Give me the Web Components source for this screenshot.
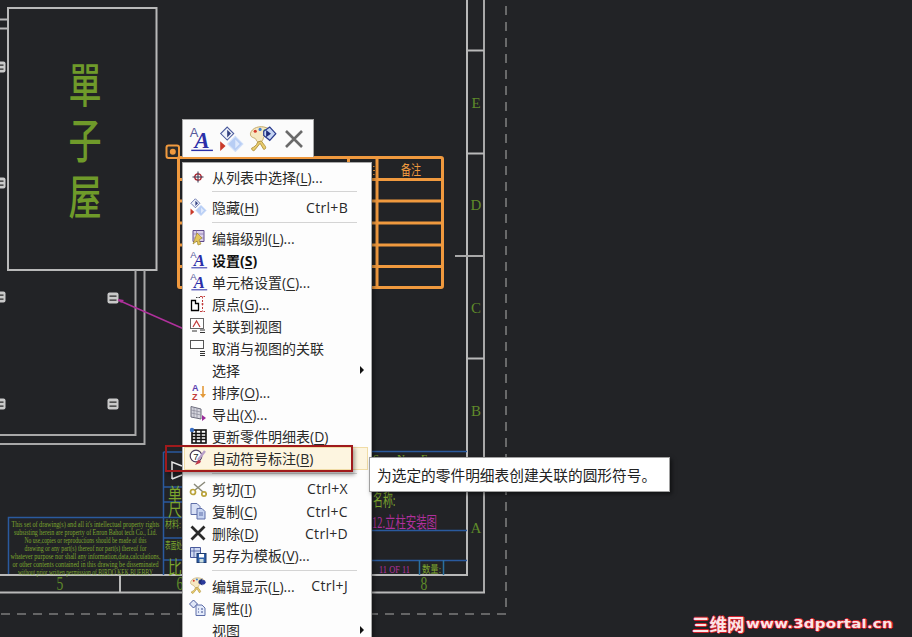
<!DOCTYPE html>
<html lang="zh">
<head>
<meta charset="utf-8">
<title>Drawing</title>
<style>
  html, body { margin: 0; height: 100%; overflow: hidden; background: #222326; }
  body { font-family: "Noto Sans", "Noto Sans CJK SC", sans-serif; }
</style>
</head>
<body>

<cad-sheet>
  <mini-toolbar></mini-toolbar>
  <ctx-menu>
    <ctx-item icon="target" label="从列表中选择(<u>L</u>)..."></ctx-item>
    <ctx-sep></ctx-sep>
    <ctx-item icon="hide" label="隐藏(<u>H</u>)" shortcut="Ctrl+B"></ctx-item>
    <ctx-sep></ctx-sep>
    <ctx-item icon="level" label="编辑级别(<u>L</u>)..."></ctx-item>
    <ctx-item icon="aa" label="设置(<u>S</u>)" bold></ctx-item>
    <ctx-item icon="aa" label="单元格设置(<u>C</u>)..."></ctx-item>
    <ctx-item icon="origin" label="原点(<u>G</u>)..."></ctx-item>
    <ctx-item icon="link" label="关联到视图"></ctx-item>
    <ctx-item icon="unlink" label="取消与视图的关联"></ctx-item>
    <ctx-item label="选择" submenu></ctx-item>
    <ctx-item icon="sort" label="排序(<u>O</u>)..."></ctx-item>
    <ctx-item icon="export" label="导出(<u>X</u>)..."></ctx-item>
    <ctx-item icon="update" label="更新零件明细表(<u>D</u>)"></ctx-item>
    <ctx-item icon="balloon" label="自动符号标注(<u>B</u>)" active></ctx-item>
    <ctx-sep></ctx-sep>
    <ctx-item icon="cut" label="剪切(<u>T</u>)" shortcut="Ctrl+X"></ctx-item>
    <ctx-item icon="copy" label="复制(<u>C</u>)" shortcut="Ctrl+C"></ctx-item>
    <ctx-item icon="del" label="删除(<u>D</u>)" shortcut="Ctrl+D"></ctx-item>
    <ctx-item icon="template" label="另存为模板(<u>V</u>)..."></ctx-item>
    <ctx-sep></ctx-sep>
    <ctx-item icon="palette" label="编辑显示(<u>L</u>)..." shortcut="Ctrl+J"></ctx-item>
    <ctx-item icon="props" label="属性(<u>I</u>)"></ctx-item>
    <ctx-item label="视图" submenu></ctx-item>
  </ctx-menu>
  <red-mark></red-mark>
  <hint-tip>为选定的零件明细表创建关联的圆形符号。</hint-tip>
  <water-mark></water-mark>
</cad-sheet>

<script>
// shared icon drawings
const aaIcon = (s) => `<svg width="${s}" height="${s}" viewBox="0 0 24 24"><text x="1.500" y="10.500" font-family="Liberation Sans" font-size="12" fill="#55589a">A</text><text x="6" y="20.500" font-family="Liberation Serif" font-style="italic" font-weight="bold" font-size="21" fill="#2b2fa8">A</text><path d="M3 22.500h20" stroke="#2b2fa8" stroke-width="1.300"/></svg>`;
const hideIcon = (s) => `<svg width="${s}" height="${s}" viewBox="0 0 24 24"><path d="M8.500 1l6 6-6 6-6-6z" fill="#eef2fb" stroke="#4a5a9c" stroke-width="1"/><path d="M8.500 3.500v7l3.500-3.500z" fill="#33407f"/><path d="M2 14l5 4.500-5 4.500z" fill="#c93a2a"/><path d="M16 9.500l7 7-7 7-7-7z" fill="#b7cdf4" stroke="#d2e0f9"/><path d="M16 12.500v8l4-4z" fill="#dfe9fc"/></svg>`;
const paletteIcon = (s, mark) => `<svg width="${s}" height="${s}" viewBox="0 0 24 24"><path d="M2 8c1-5 8-7 13-5 4 1 6 4 4 6-2 1-5 0-6 2-1 3-2 5-4 4-2 0-2-2-3-3-2-1-4-1-4-4z" fill="#f6e8c2" stroke="#c0a665" stroke-width=".8"/><circle cx="6" cy="6" r="1.300" fill="#d43c2c"/><circle cx="10" cy="4.500" r="1.300" fill="#3f7fd4"/><circle cx="14" cy="5.500" r="1.200" fill="#4da84d"/><path d="M8 15c-1 3-3 4-5 5 0 2 2 3 3 1l4-5 3 5c2 0 2-2 1-3l-3-4z" fill="#e8cc6c" stroke="#a98a35" stroke-width=".7"/>${mark}</svg>`;
const icons = {
  target: `<svg width="18" height="18" viewBox="0 0 18 18"><circle cx="9" cy="9" r="3.200" fill="none" stroke="#b0252f" stroke-width="1.300"/><path d="M9 3.500v11M3.500 9h11" stroke="#30304a" stroke-width="1"/></svg>`,
  hide: hideIcon(18),
  level: `<svg width="18" height="18" viewBox="0 0 18 18"><path d="M4 1.500h11v11H4z" fill="#dcd0ea" stroke="#5f4a8c"/><path d="M7.500 1.500v11M4 5h11M4 9h11" stroke="#8a78ad" stroke-width=".8"/><path d="M8 4l5 5-3 2 2 4-3 1-1-4-4 3z" fill="#e3c55a" stroke="#a08a35" stroke-width=".7"/></svg>`,
  aa: aaIcon(19),
  origin: `<svg width="18" height="18" viewBox="0 0 18 18"><path d="M2.500 5.500h4v3h3v7h-7z" fill="#fff" stroke="#000" stroke-width="1.300"/><path d="M11 1.500h5M13.500 1.500v15M11 16.500h5" stroke="#c23a3a" stroke-width="1" stroke-dasharray="2 1.500"/><path d="M7 2.500h4" stroke="#3a3a3a" stroke-dasharray="1.500 1"/><circle cx="13.500" cy="9" r="1" fill="#c23a3a"/></svg>`,
  link: `<svg width="18" height="18" viewBox="0 0 18 18"><rect x="1.500" y="1.500" width="13" height="10" fill="#fff" stroke="#666"/><path d="M4 10l3.500-6 3.500 6" fill="none" stroke="#c23a3a" stroke-width="1.200"/><path d="M3 14h5M11 13h5M11 15.500h5" stroke="#333"/></svg>`,
  unlink: `<svg width="18" height="18" viewBox="0 0 18 18"><rect x="1.500" y="1.500" width="13" height="8" fill="#fff" stroke="#555"/><path d="M11 12.500h5M11 14.500h5M11 16.500h5" stroke="#333"/></svg>`,
  sort: `<svg width="18" height="18" viewBox="0 0 18 18"><text x="3" y="8" font-family="Liberation Sans" font-weight="bold" font-size="9" fill="#5a40b0">A</text><text x="3" y="17" font-family="Liberation Sans" font-weight="bold" font-size="9" fill="#c23a3a">Z</text><path d="M14 3v10" stroke="#e39a3a" stroke-width="1.600"/><path d="M11 11l3 4 3-4z" fill="#e39a3a"/></svg>`,
  export: `<svg width="18" height="18" viewBox="0 0 18 18"><path d="M2 1.500l10 2.500v10l-10-2z" fill="#d5d5de" stroke="#6a6a7a"/><path d="M5 2.500v10M8 3v10M2 5l10 2M2 8l10 2" stroke="#8a8a9a" stroke-width=".7"/><path d="M13 10l4 3-4 3z" fill="#9a2a9a"/></svg>`,
  update: `<svg width="18" height="18" viewBox="0 0 18 18"><rect x="3" y="3" width="14" height="13" fill="#fff" stroke="#111" stroke-width="1.600"/><path d="M3 6.500h14M3 9.500h14M3 12.500h14M7 3v13M12 3v13" stroke="#111" stroke-width="1.500"/><circle cx="3" cy="3" r="2.200" fill="#3a6fc4"/></svg>`,
  balloon: `<svg width="18" height="18" viewBox="0 0 18 18"><circle cx="7" cy="7" r="5.800" fill="#fff" stroke="#4a3a5a" stroke-width="1.200"/><text x="4.200" y="10.500" font-family="Liberation Sans" font-size="9.500" fill="#222">7</text><path d="M16 2L9 11" stroke="#b9a0c8" stroke-width="2.400"/><path d="M9 11l-3 5 5-2 1-2z" fill="#c23a4a"/></svg>`,
  cut: `<svg width="18" height="18" viewBox="0 0 18 18"><path d="M16 2L6 10M5 4l9 8" stroke="#8a8a7a" stroke-width="1.500"/><circle cx="4" cy="12" r="2.500" fill="none" stroke="#b9a23a" stroke-width="1.700"/><circle cx="15" cy="14" r="2.200" fill="none" stroke="#b9a23a" stroke-width="1.700"/></svg>`,
  copy: `<svg width="18" height="18" viewBox="0 0 18 18"><path d="M2 1.500h6l3 3v8h-9z" fill="#d8e0f5" stroke="#5f6fa8"/><path d="M8 6.500h5l3 3v7.500h-8z" fill="#c5d2f0" stroke="#5f6fa8"/><path d="M10 11h4M10 13h4" stroke="#5f6fa8"/></svg>`,
  del: `<svg width="18" height="18" viewBox="0 0 18 18"><path d="M2.500 2.500l13 13M15.500 2.500l-13 13" stroke="#2a2a2a" stroke-width="2.800"/></svg>`,
  template: `<svg width="18" height="18" viewBox="0 0 18 18"><path d="M1.500 1.500h10v10h-10z" fill="#cfd9f2" stroke="#4a5a9c"/><path d="M1.500 5h10M5 1.500v10" stroke="#4a5a9c" stroke-width=".8"/><rect x="8" y="7.500" width="9" height="9" fill="#2f5fa8" stroke="#1e3c70"/><rect x="10" y="8" width="5" height="3.500" fill="#fff"/><rect x="10.500" y="13" width="4" height="3.500" fill="#cdd"/></svg>`,
  palette: paletteIcon(19, `<path d="M12 6l5-3v9l-5-3z" fill="#1f2c7a"/><circle cx="18" cy="8" r="3" fill="#2a3a9c"/>`),
  props: `<svg width="18" height="18" viewBox="0 0 18 18"><path d="M4.500 1l4 4-4 4-4-4z" fill="#dfe6f7" stroke="#4a5a9c"/><path d="M7 6h6l3 3v7.500H7z" fill="#e4ebfa" stroke="#5f6fa8"/><path d="M9 10h1M12 10h2M9 13h1M12 13h2" stroke="#3a4a8c" stroke-width="1.200"/></svg>`
};

class CadSheet extends HTMLElement {
  constructor() {
    super();
    const root = this.attachShadow({ mode: 'open' });
    const green = '#7da62e', line = '#b9b9b9', blue = '#2a5a9e', orange = '#f0993e', pink = '#b0309c';
    const handle = (x, y) => `<g transform="translate(${x} ${y})"><rect x="-5.500" y="-5.500" width="11" height="11" rx="2" fill="#c9c9c9"/><path d="M-3.500-2.500h7v1.200h-7zM-3.500 1.500h7v1.200h-7z" fill="#2a2a2a"/></g>`;
    const hl = (y, x1, x2, c, w) => `<path d="M${x1} ${y}H${x2}" stroke="${c}" stroke-width="${w}"/>`;
    const vl = (x, y1, y2, c, w) => `<path d="M${x} ${y1}V${y2}" stroke="${c}" stroke-width="${w}"/>`;
    // tall narrow lettering like the CAD font
    const tall = (x, y, t, sx, sy, attrs) => `<text transform="translate(${x} ${y}) scale(${sx} ${sy})" ${attrs || ''}>${t}</text>`;
    const fine = [
      "This set of drawing(s) and all it's intellectual property rights",
      "subsisting herein are property of Enron Bahot tech Co., Ltd.",
      "No use,copies or reproductions should be made of this",
      "drawing or any part(s) thereof nor part(s) thereof for",
      "whatever purpose nor shall any information,data,calculations,",
      "or other contents contained in this drawing be disseminated",
      "without prior written permission of BIRDO KEK BUEBBY"
    ];
    root.innerHTML = `
      <style>
        :host { display: block; position: relative; width: 912px; height: 637px; overflow: hidden; background: #222326; }
        svg.draw { position: absolute; left: 0; top: 0; }
        svg.draw text { font-family: "Liberation Serif", "Noto Sans CJK SC", serif; }
      </style>
      <svg class="draw" width="912" height="637" viewBox="0 0 912 637">
        <!-- sheet frame -->
        ${vl(467, 0, 575, line, 2)}${vl(484, 0, 593, '#a8a8a8', 2)}
        ${hl(575, 0, 468, line, 2)}${hl(592.500, 0, 485, line, 2)}
        ${vl(120, 575, 592, line, 2)}
        ${hl(50.500, 467, 484, line, 2)}${hl(153.500, 467, 484, line, 2)}${hl(358.500, 467, 484, line, 2)}
        ${hl(256, 455, 484, '#a8a8a8', 2)}
        <path d="M506 6V614H0" fill="none" stroke="#7c7c7c" stroke-width="1.600" stroke-dasharray="9 7"/>
        <g fill="#5f8a2a" font-size="15" text-anchor="middle">
          <text x="476" y="108">E</text><text x="476" y="210">D</text><text x="476" y="313">C</text>
          <text x="476" y="416">B</text><text x="476" y="533">A</text>
          ${tall(60, 590, '5', .8, 1.1, 'font-size="17"')}${tall(180, 590, '6', .8, 1.1, 'font-size="17"')}${tall(424, 590, '8', .8, 1.1, 'font-size="17"')}
        </g>

        <!-- part outline -->
        <rect x="8" y="8" width="148.500" height="262" fill="none" stroke="${line}" stroke-width="2"/>
        ${hl(19.500, 0, 8, line, 2)}${hl(28.500, 0, 8, line, 2)}
        ${vl(135.500, 270, 436, '#a8a8a8', 2)}${vl(144.500, 270, 445, '#a8a8a8', 2)}
        ${hl(435, 0, 136, '#a8a8a8', 2)}${hl(444, 0, 145, '#a8a8a8', 2)}
        <g fill="#6f9a2a" font-size="36" text-anchor="middle" font-weight="500">
          ${tall(85, 102, '單', .92, 1.28)}${tall(85, 158, '子', .92, 1.28)}${tall(85, 214, '屋', .92, 1.28)}
        </g>
        ${handle(0, 67)}${handle(0, 183)}${handle(0, 297)}${handle(113, 298)}${handle(0, 404)}${handle(113, 404)}
        <path d="M118 300L184 329" stroke="${pink}" stroke-width="1.400"/>
        <path d="M118 299l6 1-3 3z" fill="${pink}"/>

        <!-- title block -->
        <g fill="none" stroke="${blue}" stroke-width="1.500">
          <path d="M8.500 574V517.500H182M163.500 452V575M163.500 452H182M163.500 487H182M163.500 502H182M163.500 538H182M163.500 560H182"/>
          <path d="M372 451.500H467M372 530.500H467M372 560.500H467"/>
          <path d="M419.500 560V575M443.500 560V575" stroke="#2a6f9e"/>
        </g>
        <g fill="${green}">
          ${fine.map((t, i) => `<text x="85.500" y="${526.500 + i * 8.100}" text-anchor="middle" font-size="8.400" textLength="${[148,143,122,122,150,146,135][i]}" lengthAdjust="spacingAndGlyphs">${t}</text>`).join('')}
          ${tall(168, 501, '单', .92, 1.2, 'font-size="15"')}
          ${tall(168, 516, '尺', .92, 1.1, 'font-size="15"')}
          <text x="165" y="528" font-size="10" textLength="16" lengthAdjust="spacingAndGlyphs">材料:</text>
          <text x="165" y="549" font-size="10" textLength="17" lengthAdjust="spacingAndGlyphs">表面处</text>
          ${tall(168, 574, '比', .92, 1.2, 'font-size="15"')}
          <text x="373" y="462" font-size="11">S</text><text x="397" y="462" font-size="11">N</text><text x="421" y="462" font-size="11">E</text>
          ${tall(373, 506, '<tspan>名称:</tspan>', .66, 1.1, 'font-size="15"')}
          <text x="422" y="573" font-size="10.500" textLength="19" lengthAdjust="spacingAndGlyphs">数量:</text>
        </g>
        <g fill="${pink}">
          <text x="372" y="528" font-size="16" textLength="65" lengthAdjust="spacingAndGlyphs">12.立柱安装图</text>
          <text x="379" y="573" font-size="10" textLength="31" lengthAdjust="spacingAndGlyphs">11 OF 11</text>
        </g>
        <path d="M172 479V462L182 466M172 479L182 475" fill="none" stroke="#e8e8e8" stroke-width="1.500"/>

        <!-- selected table -->
        <g fill="none" stroke="${orange}" stroke-width="3">
          <rect x="178.500" y="157.500" width="264" height="130" rx="1.500"/>
          <path d="M178 179.500H443M178 201H443M178 223H443M178 245H443M178 266.500H443"/>
          <path d="M348.500 157V180M377 157V287"/>
        </g>
        <path d="M373 166.500h1.500M373 170.500h2M373 174.500h1.500" stroke="${orange}"/>
        <rect x="166.500" y="145.500" width="12.500" height="12.500" rx="2" fill="#2a2a2a" stroke="${orange}" stroke-width="2"/>
        <circle cx="172.800" cy="151.800" r="3" fill="${orange}"/>
        <text x="401" y="175" font-size="14" fill="${orange}" textLength="20" lengthAdjust="spacingAndGlyphs">备注</text>
      </svg>
      <slot></slot>`;
  }
}

class MiniToolbar extends HTMLElement {
  constructor() {
    super();
    const root = this.attachShadow({ mode: 'open' });
    root.innerHTML = `
      <style>
        :host { position: absolute; left: 182px; top: 119px; width: 132px; height: 38px; box-sizing: border-box;
          display: flex; align-items: center; gap: 4px; padding: 0 4px 0 5px; background: #fbfbfb; border: 1px solid #a9a9a9; border-bottom: 0; }
        svg { display: block; flex: none; }
      </style>
      ${aaIcon(26)}${hideIcon(26)}${paletteIcon(29, '<path d="M13 6l5-3.500 5 5.500-5 5.500-5-4z" fill="#c4d4f4" stroke="#2a3a8c"/><path d="M15 5v6l4-3z" fill="#1f2c7a"/>')}
      <svg width="26" height="26" viewBox="0 0 26 26"><path d="M5 5l16 16M21 5L5 21" stroke="#6a6a6a" stroke-width="2.600"/></svg>`;
  }
}

class CtxMenu extends HTMLElement {
  constructor() {
    super();
    this.attachShadow({ mode: 'open' }).innerHTML = `
      <style>
        :host { position: absolute; left: 182px; top: 162px; width: 190px; box-sizing: border-box; padding: 2.500px 2px 0 1px;
          display: flex; flex-direction: column; background: #fdfdfd; border: 1px solid #a9a9a9; border-bottom: 0;
          box-shadow: 2px 2px 4px rgba(0,0,0,.4); height: 480px; overflow: hidden;
          font-family: "Open Sans", "Noto Sans CJK SC", sans-serif; font-size: 14px; color: #2a2a2a; }
      </style>
      <slot></slot>`;
  }
}

class CtxItem extends HTMLElement {
  constructor() {
    super();
    const bold = this.hasAttribute('bold');
    const sub = this.hasAttribute('submenu');
    const shortcut = this.getAttribute('shortcut');
    const icon = icons[this.getAttribute('icon')] || '';
    this.attachShadow({ mode: 'open' }).innerHTML = `
      <style>
        :host { display: flex; align-items: center; height: 22.100px; flex: none; position: relative; white-space: nowrap; }
        :host([active]) { background: #fdf5e0; box-shadow: inset 0 0 0 1px #f0dca6; margin-right: 1px; }
        .ico { width: 28px; display: flex; justify-content: center; flex: none; }
        .ico svg { display: block; }
        .txt { ${bold ? 'font-weight: 700; color: #111;' : ''} }
        u { text-underline-offset: 2px; text-decoration-thickness: 1px; }
        .key { position: absolute; right: 21px; letter-spacing: .3px; }
        .arr { position: absolute; right: 5px; width: 0; height: 0; border-left: 4px solid #111; border-top: 4px solid transparent; border-bottom: 4px solid transparent; }
      </style>
      <span class="ico">${icon}</span>
      <span class="txt">${this.getAttribute('label')}</span>
      ${shortcut ? `<span class="key">${shortcut}</span>` : ''}
      ${sub ? '<span class="arr"></span>' : ''}`;
  }
}

class CtxSep extends HTMLElement {
  constructor() {
    super();
    this.attachShadow({ mode: 'open' }).innerHTML = `
      <style>
        :host { display: flex; align-items: center; height: 8.400px; flex: none; padding: 0 12px 0 28px; }
        i { display: block; flex: 1; height: 1px; background: #d4d4d4; }
      </style><i></i>`;
  }
}

class RedMark extends HTMLElement {
  constructor() {
    super();
    this.attachShadow({ mode: 'open' }).innerHTML = `
      <style>
        :host { position: absolute; left: 165px; top: 445px; width: 188px; height: 27px; box-sizing: border-box;
          border: 2.500px solid #a01a1c; box-shadow: 2px 3px 4px rgba(0,0,0,.35); }
      </style>`;
  }
}

class HintTip extends HTMLElement {
  constructor() {
    super();
    this.attachShadow({ mode: 'open' }).innerHTML = `
      <style>
        :host { position: absolute; left: 369px; top: 457px; width: 301px; height: 35px; box-sizing: border-box;
          display: flex; align-items: center; padding-left: 7px; background: #fff; border: 1px solid #a0a0a0;
          box-shadow: 2px 2px 4px rgba(0,0,0,.5); white-space: nowrap;
          font-family: "Noto Sans CJK SC", sans-serif; font-size: 14.700px; color: #222; }
      </style><slot></slot>`;
  }
}

class WaterMark extends HTMLElement {
  constructor() {
    super();
    this.attachShadow({ mode: 'open' }).innerHTML = `
      <style>
        :host { position: absolute; left: 692px; top: 614px; white-space: nowrap; display: flex; align-items: center; height: 18px;
          color: #fbe4e6; font-family: "DejaVu Sans", "Noto Sans CJK SC", sans-serif; font-weight: 700;
          text-shadow: 1px 0 #d0202c, -1px 0 #d0202c, 0 1px #d0202c, 0 -1px #d0202c; }
        .cn { font-size: 17.500px; font-family: "Noto Sans CJK SC", sans-serif; font-weight: 700; width: 54px; flex: none; }
        .en { font-size: 12.800px; letter-spacing: .2px; display: inline-block; transform: scaleX(1.17); transform-origin: left center; }
      </style><span class="cn">三维网</span><span class="en">www.3dportal.cn</span>`;
  }
}

customElements.define('cad-sheet', CadSheet);
customElements.define('mini-toolbar', MiniToolbar);
customElements.define('ctx-menu', CtxMenu);
customElements.define('ctx-item', CtxItem);
customElements.define('ctx-sep', CtxSep);
customElements.define('red-mark', RedMark);
customElements.define('hint-tip', HintTip);
customElements.define('water-mark', WaterMark);
</script>
</body>
</html>
